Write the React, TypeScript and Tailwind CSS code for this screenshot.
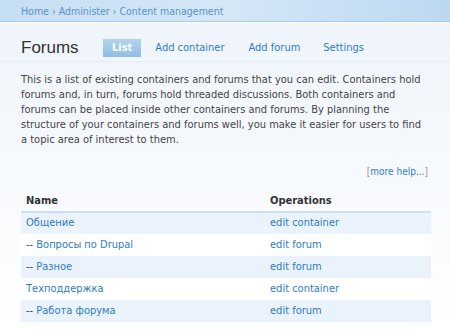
import React from "react";

const rows = [
  { name: "Общение", op: "edit container" },
  { name: "-- Вопросы по Drupal", op: "edit forum", child: true },
  { name: "-- Разное", op: "edit forum", child: true },
  { name: "Техподдержка", op: "edit container" },
  { name: "-- Работа форума", op: "edit forum", child: true },
];

const font = { fontFamily: '"DejaVu Sans Condensed", "DejaVu Sans", Tahoma, sans-serif' };

export default function App() {
  return (
    <div
      className="h-[331px] w-[450px] overflow-hidden bg-gradient-to-b from-[#eef4fb] via-[#f6f9fd] to-white text-[#444]"
      style={font}
    >
      {/* breadcrumb */}
      <div className="h-[22px] border-b border-[#a9cbea] bg-gradient-to-r from-[#c6def4] via-[#d5e7f7] to-[#bcd8f1] px-[21px] pt-[2px] text-[10.5px] leading-[19px] text-[#5b93c7]">
        Home › Administer › Content management
      </div>
      <div className="h-px bg-white" />

      {/* title + tabs */}
      <div className="flex h-[39px] items-center border-b border-[#e4edf6] px-[21px] pt-[12px]">
        <h1 className="w-[82px] text-[17px] text-[#333]" style={{ fontFamily: '"Liberation Sans", Arial, sans-serif' }}>
          Forums
        </h1>
        <div className="flex items-center text-[11px] text-[#2f7cc4]">
          <span className="mr-[14px] bg-gradient-to-b from-[#b4d4ee] to-[#8fbde4] px-[9px] py-[1px] font-bold text-white">List</span>
          <span className="mr-[24px]">Add container</span>
          <span className="mr-[23px]">Add forum</span>
          <span>Settings</span>
        </div>
      </div>

      {/* description */}
      <div className="px-[21px] pt-[10px]">
        <p className="text-[11px] leading-[15px] text-[#444]">
          This is a list of existing containers and forums that you can edit. Containers hold forums and, in turn, forums hold
          threaded discussions. Both containers and forums can be placed inside other containers and forums. By planning the
          structure of your containers and forums well, you make it easier for users to find a topic area of interest to them.
        </p>
        <div className="mt-[17px] pr-[1px] text-right text-[10px] text-[#2f7cc4]">
          <span className="text-[#999]">[</span>more help...<span className="text-[#999]">]</span>
        </div>

        {/* table */}
        <table className="mt-[12px] w-[410px] text-[11px]">
          <thead>
            <tr className="border-b-2 border-[#cfe1f1]">
              <th className="h-[21px] w-[249px] pl-[5px] text-left font-bold text-[#333]">Name</th>
              <th className="text-left font-bold text-[#333]">Operations</th>
            </tr>
          </thead>
          <tbody>
            {rows.map((r, i) => (
              <tr key={i} className={i % 2 === 0 ? "bg-[#eaf3fb]" : "bg-white"}>
                <td className="h-[22px] pl-[5px] text-[#2f7cc4]">
                  {r.child ? <span className="text-[#444]">-- </span> : null}
                  {r.child ? r.name.slice(3) : r.name}
                </td>
                <td className="text-[#2f7cc4]">{r.op}</td>
              </tr>
            ))}
          </tbody>
        </table>
      </div>
    </div>
  );
}
